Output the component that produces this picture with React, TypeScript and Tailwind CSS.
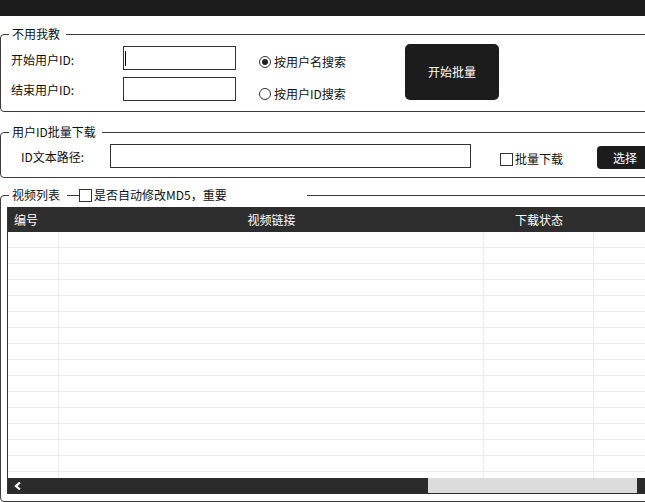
import React from "react";

const font = "font-['Noto_Sans_CJK_SC','Liberation_Sans',sans-serif]";

function Radio({ checked, label }: { checked?: boolean; label: string }) {
  return (
    <div className="flex h-[16px] items-center gap-[3px]">
      <span className="flex h-[12px] w-[12px] items-center justify-center rounded-full border border-[#333] bg-white">
        {checked ? <span className="h-[6px] w-[6px] rounded-full bg-[#222]" /> : null}
      </span>
      <span className="text-[12px] leading-[16px]">{label}</span>
    </div>
  );
}

function Checkbox({ label }: { label: string }) {
  return (
    <div className="flex h-[16px] items-center gap-[2px]">
      <span className="h-[13px] w-[13px] shrink-0 border border-[#333] bg-white" />
      <span className="whitespace-nowrap text-[12px] leading-[16px]">{label}</span>
    </div>
  );
}

export default function App() {
  const rows = Array.from({ length: 16 });

  return (
    <div className={`h-[502px] w-[645px] overflow-hidden bg-white text-[#111] ${font}`}>
      {/* window title strip */}
      <div className="h-[16px] w-full bg-[#1b1b1b]" />

      {/* 不用我教 */}
      <fieldset className="mt-[10px] w-[680px] rounded-[4px] border border-[#3c3c3c]">
        <legend className="ml-[8px] pl-[3px] pr-[6px] text-[12px] leading-[16px]">不用我教</legend>
        <div className="flex h-[69px] pl-[10px]">
          <div className="flex flex-col gap-[7px] pt-[4px]">
            <div className="flex h-[24px] items-center">
              <span className="w-[112px] pt-[3px] text-[12px] leading-[16px]">开始用户ID:</span>
              <div className="flex h-[24px] w-[113px] items-center border border-[#333] bg-white">
                <span className="ml-[1px] h-[15px] w-[1px] bg-black" />
              </div>
            </div>
            <div className="flex h-[24px] items-center">
              <span className="w-[112px] pt-[1px] text-[12px] leading-[16px]">结束用户ID:</span>
              <div className="h-[24px] w-[113px] border border-[#333] bg-white" />
            </div>
          </div>
          <div className="ml-[23px] flex w-[146px] flex-col gap-[16px] pt-[12px]">
            <Radio checked label="按用户名搜索" />
            <Radio label="按用户ID搜索" />
          </div>
          <button className="mt-[2px] h-[56px] w-[94px] rounded-[5px] bg-[#1c1c1c] text-[12px] text-white">
            开始批量
          </button>
        </div>
      </fieldset>

      {/* 用户ID批量下载 */}
      <fieldset className="mt-[12px] w-[680px] rounded-[4px] border border-[#3c3c3c]">
        <legend className="ml-[8px] pl-[3px] pr-[6px] text-[12px] leading-[16px]">用户ID批量下载</legend>
        <div className="flex h-[37px] items-start pl-[20px]">
          <span className="mt-[9px] w-[89px] text-[12px] leading-[16px]">ID文本路径:</span>
          <div className="mt-[4px] h-[24px] w-[361px] border border-[#333] bg-white" />
          <div className="ml-[29px] mt-[11px] w-[97px]">
            <Checkbox label="批量下载" />
          </div>
          <button className="mt-[6px] h-[23px] w-[56px] rounded-[4px] bg-[#1c1c1c] text-[12px] text-white">
            选择
          </button>
        </div>
      </fieldset>

      {/* 视频列表 */}
      <fieldset className="mt-[9px] w-[680px] rounded-[4px] border border-[#3c3c3c]">
        <legend className="ml-[8px] text-[12px] leading-[16px]">
          <div className="flex h-[16px] w-[298px] items-center">
            <span className="pl-[3px]">视频列表</span>
            <span className="ml-[7px] h-[1px] w-[12px] bg-[#3c3c3c]" />
            <Checkbox label="是否自动修改MD5，重要" />
          </div>
        </legend>
        <div className="pb-[7px] pl-[6px] pt-[4px]">
          <div className="w-[700px] border-l border-[#333]">
            <div className="flex h-[25px] items-center bg-[#2d2d2d] text-[12px] text-white">
              <span className="w-[51px] pl-[6px]">编号</span>
              <span className="w-[425px] text-center">视频链接</span>
              <span className="w-[110px] text-center">下载状态</span>
              <span className="flex-1" />
            </div>
            <div className="h-[246px] overflow-hidden">
              {rows.map((_, i) => (
                <div key={i} className="flex h-[16px] border-b border-[#ececec]">
                  <span className="w-[51px] border-r border-[#ececec]" />
                  <span className="w-[425px] border-r border-[#ececec]" />
                  <span className="w-[110px] border-r border-[#ececec]" />
                  <span className="flex-1" />
                </div>
              ))}
            </div>
            <div className="flex h-[16px] items-center bg-[#2b2b2b]">
              <svg className="ml-[6px] h-[8px] w-[8px]" viewBox="0 0 8 8">
                <polyline points="6,0.5 2,4 6,7.5" fill="none" stroke="white" strokeWidth="2.2" />
              </svg>
              <span className="ml-[406px] h-[15px] w-[209px] self-start bg-[#dcdcdc]" />
              <svg className="ml-[7px] h-[8px] w-[8px]" viewBox="0 0 8 8">
                <polyline points="2,0.5 6,4 2,7.5" fill="none" stroke="white" strokeWidth="2.2" />
              </svg>
            </div>
          </div>
        </div>
      </fieldset>
    </div>
  );
}
